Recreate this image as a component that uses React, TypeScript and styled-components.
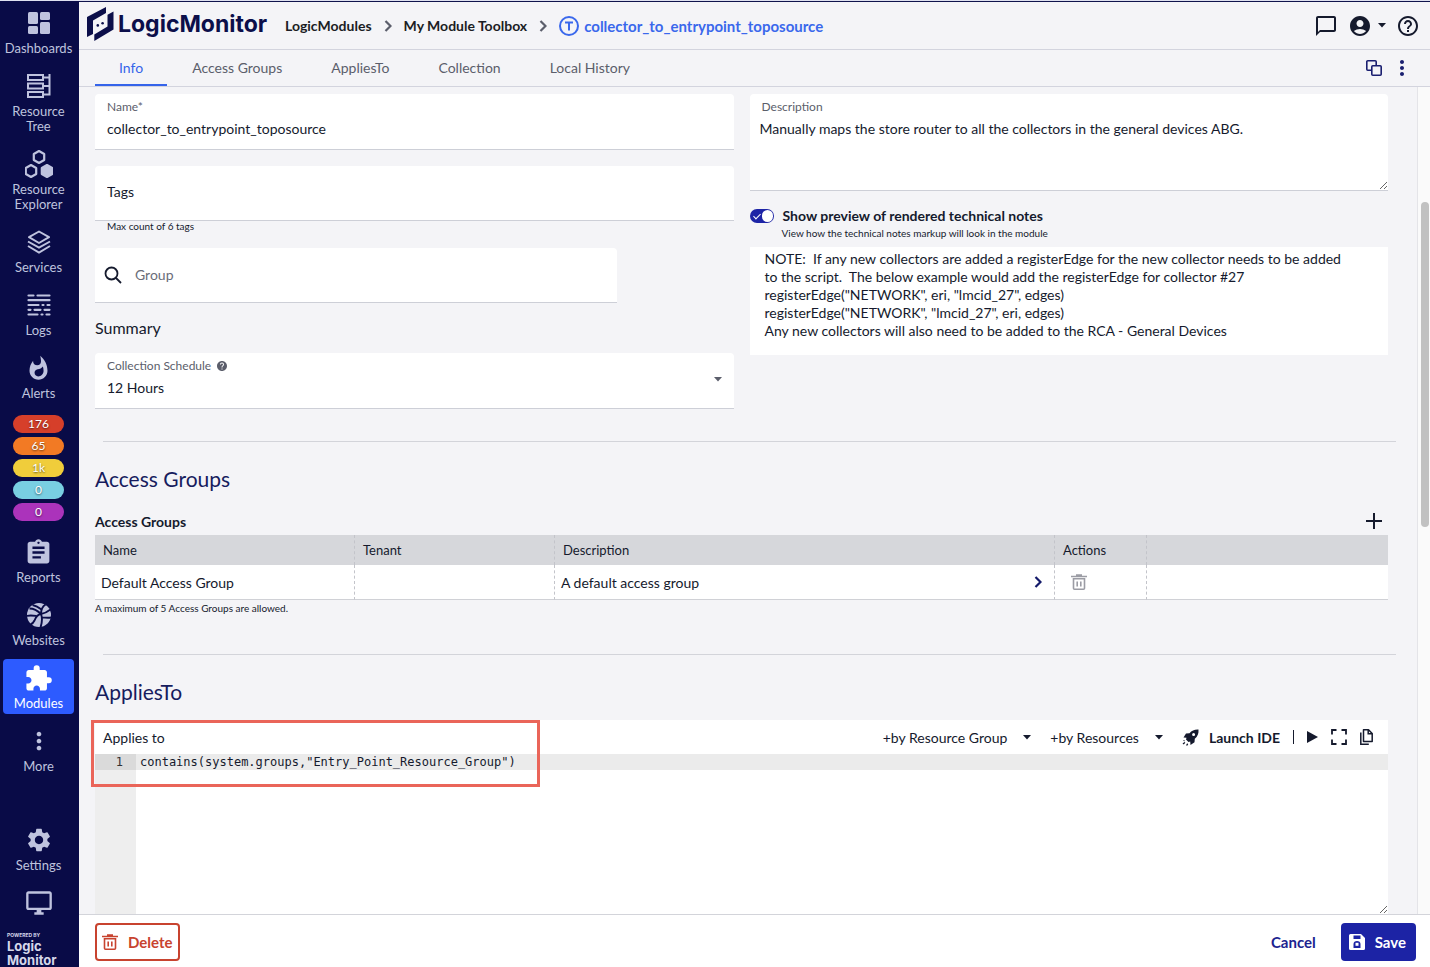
import React from "react";
import styled, { createGlobalStyle } from "styled-components";
import {
  MdAccountCircle,
  MdAssignment,
  MdChatBubbleOutline,
  MdExtension,
  MdHelp,
  MdHelpOutline,
  MdMoreVert,
  MdOutlineDesktopWindows,
  MdSettings,
  MdWhatshot,
} from "react-icons/md";

const GlobalStyle = createGlobalStyle`
  *, *::before, *::after { box-sizing: border-box; }
  body { margin: 0; background: #f4f4f7; }
  body, button, input, textarea, select {
    font-family: Lato, "Liberation Sans", sans-serif;
    color: #151a2d;
  }
  button { border: 0; padding: 0; background: none; cursor: pointer; }
  a { text-decoration: none; }
  svg { display: block; flex: none; }
`;

const Shell = styled.div`
  display: flex;
  height: 100vh;
  overflow: hidden;
  border-top: 1px solid #dfe1f0;
`;

/* ---------- sidebar ---------- */

const Sidebar = styled.nav`
  flex: none;
  width: 79px;
  display: flex;
  flex-direction: column;
  gap: 8px;
  padding: 3px 5px 0 3px;
  background: #090b47;
`;

const NavItem = styled.a<{ $active?: boolean }>`
  display: flex;
  flex-direction: column;
  align-items: center;
  gap: 4px;
  padding: 5px 0 3px;
  border-radius: 4px;
  background: ${(p) => (p.$active ? "#2d5bff" : "transparent")};
  color: ${(p) => (p.$active ? "#ffffff" : "#bfc3de")};
  font-size: 13px;
  line-height: 15px;
  text-align: center;
`;

const NavIcon = styled.span`
  display: flex;
  align-items: center;
  justify-content: center;
  height: 28px;
`;

const BadgeList = styled.div`
  display: flex;
  flex-direction: column;
  align-items: center;
  gap: 4px;
  margin: 3px 0 4px;
`;

const Badge = styled.a<{ $color: string }>`
  width: 51px;
  border-radius: 9px;
  background: ${(p) => p.$color};
  color: #fff;
  font-size: 12px;
  line-height: 18px;
  text-align: center;
  text-shadow: 0 1px 2px rgba(0, 0, 0, 0.6);
`;

const NavBottom = styled.div`
  display: flex;
  flex-direction: column;
  gap: 8px;
  margin-top: auto;
`;

const Powered = styled.div`
  padding: 4px 4px 0;
  color: #d5d8ea;
  font-family: Inter, sans-serif;
  font-size: 13px;
  font-weight: 700;
  line-height: 14px;
`;

const PoweredSmall = styled.div`
  font-size: 5px;
  line-height: 7px;
`;

/* ---------- header ---------- */

const Main = styled.div`
  flex: 1;
  min-width: 0;
  display: flex;
  flex-direction: column;
  border-top: 1px solid #10144d;
`;

const TopBar = styled.header`
  flex: none;
  display: flex;
  align-items: center;
  height: 48px;
  padding: 0 10px 0 8px;
  border-bottom: 1px solid #d3d4de;
`;

const Logo = styled.a`
  display: flex;
  align-items: center;
  gap: 4px;
  width: 198px;
  padding-bottom: 4px;
  color: #0c0f4a;
  font-family: Inter, sans-serif;
  font-size: 23px;
  font-weight: 700;
`;

const Crumbs = styled.div`
  display: flex;
  align-items: center;
  gap: 12px;
`;

const Crumb = styled.a<{ $current?: boolean }>`
  display: flex;
  align-items: center;
  gap: 5px;
  color: ${(p) => (p.$current ? "#3a68ec" : "#1b1d24")};
  font-size: ${(p) => (p.$current ? 15 : 14)}px;
  font-weight: 700;
`;

const Actions = styled.div<{ $gap: number }>`
  display: flex;
  align-items: center;
  gap: ${(p) => p.$gap}px;
  margin-left: auto;
`;

const IconButton = styled.button<{ $color?: string }>`
  display: flex;
  align-items: center;
  gap: 6px;
  color: ${(p) => p.$color ?? "#151a2d"};
`;

const TabBar = styled.div`
  flex: none;
  display: flex;
  gap: 1px;
  height: 37px;
  padding: 0 16px;
  border-bottom: 1px solid #d3d4de;
`;

const Tab = styled.button<{ $active?: boolean }>`
  padding: 0 24px;
  border-bottom: 2px solid ${(p) => (p.$active ? "#3564ea" : "transparent")};
  color: ${(p) => (p.$active ? "#3564ea" : "#5b5e6b")};
  font-size: 14px;
`;

/* ---------- content ---------- */

const Body = styled.div`
  flex: 1;
  min-height: 0;
  display: flex;
`;

const Content = styled.main`
  flex: 1;
  min-width: 0;
  display: flex;
  flex-direction: column;
  padding: 7px 29px 0 16px;
  overflow: hidden;
`;

const ScrollTrack = styled.div`
  flex: none;
  width: 13px;
  padding: 115px 1px 0 3px;
  border-left: 1px solid #e4e4e8;
  background: #fafafa;
`;

const ScrollThumb = styled.div`
  height: 325px;
  border-radius: 4px;
  background: #c1c1c1;
`;

const Columns = styled.div`
  flex: none;
  display: grid;
  grid-template-columns: 1fr 1fr;
  gap: 16px;
`;

const Column = styled.div`
  display: flex;
  flex-direction: column;
  min-width: 0;
`;

const Field = styled.div`
  display: flex;
  flex-direction: column;
  justify-content: center;
  gap: 2px;
  height: 56px;
  padding: 0 12px 3px;
  border-bottom: 1px solid #cdcfd7;
  border-radius: 4px 4px 0 0;
  background: #fff;
`;

const FieldLabel = styled.label`
  display: flex;
  align-items: center;
  gap: 5px;
  color: #5b5e6b;
  font-size: 12px;
  line-height: 16px;
`;

const TextInput = styled.input`
  width: 100%;
  padding: 0;
  border: 0;
  outline: 0;
  background: none;
  font-size: 14px;
  line-height: 24px;
  &::placeholder { color: inherit; opacity: 1; }
`;

const TagsField = styled(Field)`
  height: 55px;
  margin-top: 16px;
`;

const GroupField = styled(TagsField)`
  flex-direction: row;
  justify-content: flex-start;
  align-items: center;
  gap: 13px;
  width: calc(100% - 117px);
  padding: 0 9px;
  input::placeholder { color: #6a6d79; }
`;

const ScheduleField = styled(Field)`
  flex-direction: row;
  align-items: center;
  margin-top: 15px;
`;

const SelectColumn = styled.div`
  flex: 1;
  display: flex;
  flex-direction: column;
  gap: 2px;
`;

const Select = styled.select`
  padding: 0;
  border: 0;
  appearance: none;
  background: none;
  font-size: 14px;
  line-height: 24px;
`;

const Hint = styled.div<{ $indent?: number; $top?: number }>`
  flex: none;
  margin-top: ${(p) => p.$top ?? 0}px;
  padding-left: ${(p) => p.$indent ?? 0}px;
  font-size: 10px;
  line-height: 11px;
`;

const SummaryTitle = styled.h3`
  margin: 15px 0 0;
  font-size: 16px;
  font-weight: 400;
  line-height: 20px;
`;

const DescriptionField = styled.div`
  display: flex;
  flex-direction: column;
  height: 97px;
  padding-top: 5px;
  border-bottom: 1px solid #cdcfd7;
  border-radius: 4px 4px 0 0;
  background: #fff;
  label { padding-left: 12px; }
`;

const DescriptionArea = styled.textarea`
  flex: 1;
  width: 100%;
  padding: 5px 10px 0;
  border: 0;
  outline: 0;
  resize: vertical;
  background: none;
  font-size: 14px;
  line-height: 18px;
`;

const ToggleRow = styled.label`
  display: flex;
  align-items: center;
  gap: 9px;
  margin-top: 15px;
  font-size: 14px;
  font-weight: 700;
  line-height: 20px;
`;

const Toggle = styled.input`
  position: relative;
  flex: none;
  appearance: none;
  width: 24px;
  height: 14px;
  margin: 0;
  border-radius: 7px;
  background: #1d24a6;
  &::before {
    content: "";
    position: absolute;
    right: 1px;
    top: 1px;
    width: 11px;
    height: 12px;
    border-radius: 6px;
    background: #fff;
  }
  &::after {
    content: "";
    position: absolute;
    left: 5px;
    top: 3px;
    width: 4px;
    height: 7px;
    border: solid #fff;
    border-width: 0 1px 1px 0;
    transform: rotate(45deg);
  }
`;

const Notes = styled.div`
  margin-top: 8px;
  padding: 3px 8px 15px 15px;
  background: #fff;
  font-size: 14px;
  line-height: 18px;
  white-space: pre-wrap;
`;

const Divider = styled.hr<{ $top: number }>`
  flex: none;
  height: 1px;
  margin: ${(p) => p.$top}px -8px 0 8px;
  border: 0;
  background: #d3d4da;
`;

const SectionTitle = styled.h2`
  flex: none;
  margin: 23px 0 0;
  color: #171c5e;
  font-size: 21px;
  font-weight: 400;
  line-height: 28px;
`;

const TableHeading = styled.div`
  flex: none;
  display: flex;
  align-items: center;
  justify-content: space-between;
  height: 28px;
  margin-top: 14px;
  padding-right: 6px;
  font-size: 14px;
  font-weight: 700;
`;

const Table = styled.table`
  flex: none;
  width: 100%;
  table-layout: fixed;
  border-collapse: separate;
  border-spacing: 0;
  th, td {
    text-align: left;
    border-right: 1px dashed #c3c4ca;
  }
  th:last-child, td:last-child { border-right: 0; }
  th {
    height: 30px;
    padding: 0 8px;
    background: #d6d7db;
    font-size: 13px;
    font-weight: 400;
  }
  td {
    height: 35px;
    padding: 0 6px;
    border-bottom: 1px solid #d0d1d6;
    background: #fff;
    font-size: 14px;
  }
`;

const Col = styled.col<{ $width?: number }>`
  width: ${(p) => (p.$width ? `${p.$width}px` : "auto")};
`;

const CellRow = styled.div`
  display: flex;
  align-items: center;
  justify-content: space-between;
  padding-right: 6px;
`;

const TrashCell = styled.td`
  && { padding-left: 16px; }
`;

const Editor = styled.section`
  position: relative;
  flex: 1;
  min-height: 160px;
  display: flex;
  flex-direction: column;
  margin-top: 14px;
  background: #fff;
`;

const EditorBar = styled.div`
  flex: none;
  display: flex;
  align-items: center;
  height: 34px;
  padding: 0 15px 0 8px;
  font-size: 14px;
`;

const EditorTools = styled.div`
  display: flex;
  align-items: center;
  gap: 13px;
  margin-left: auto;
`;

const ToolMenu = styled.button`
  display: flex;
  align-items: center;
  gap: 16px;
  padding-right: 6px;
  font-size: 14px;
`;

const LaunchButton = styled.button`
  display: flex;
  align-items: center;
  gap: 10px;
  font-size: 14px;
  font-weight: 700;
`;

const ToolSeparator = styled.span`
  width: 1px;
  height: 14px;
  background: #151a2d;
`;

const EditorBody = styled.div`
  flex: 1;
  display: flex;
  min-height: 0;
  font-size: 12px;
`;

const Gutter = styled.div`
  width: 41px;
  background: #eeeeee;
`;

const LineNumber = styled.div`
  padding-right: 13px;
  background: #dadada;
  color: #333;
  font-family: "DejaVu Sans Mono", monospace;
  line-height: 16px;
  text-align: right;
`;

const Code = styled.textarea`
  flex: 1;
  padding: 0 4px;
  border: 0;
  outline: 0;
  resize: vertical;
  background: linear-gradient(#ebebeb, #ebebeb) 0 0 / 100% 16px no-repeat;
  font-family: "DejaVu Sans Mono", monospace;
  font-size: 12px;
  line-height: 16px;
`;

const Highlight = styled.div`
  position: absolute;
  left: -4px;
  top: 0;
  width: 449px;
  height: 67px;
  border: 3px solid #ea6559;
  pointer-events: none;
`;

/* ---------- footer ---------- */

const Footer = styled.footer`
  flex: none;
  display: flex;
  align-items: center;
  gap: 25px;
  height: 53px;
  padding: 1px 14px 0 16px;
  border-top: 1px solid #d3d4da;
  background: #fff;
`;

const FooterButton = styled.button`
  display: flex;
  align-items: center;
  gap: 10px;
  height: 38px;
  border-radius: 4px;
  font-size: 15px;
  font-weight: 700;
`;

const DeleteButton = styled(FooterButton)`
  padding: 0 5px;
  border: 2px solid #c8432f;
  color: #c8432f;
`;

const CancelButton = styled(FooterButton)`
  margin-left: auto;
  color: #1c2390;
`;

const SaveButton = styled(FooterButton)`
  padding: 0 10px 0 8px;
  background: #1c23a5;
  color: #fff;
`;

/* ---------- icons ---------- */

const DashboardIcon = () => (
  <svg width="22" height="22" viewBox="0 0 22 22" fill="currentColor">
    <rect width="10" height="12" rx="1.5" />
    <rect y="14" width="10" height="8" rx="1.5" />
    <rect x="12" width="10" height="8" rx="1.5" />
    <rect x="12" y="10" width="10" height="12" rx="1.5" />
  </svg>
);

const TreeIcon = () => (
  <svg width="24" height="24" viewBox="0 0 24 24" fill="none" stroke="currentColor" strokeWidth="2">
    <rect x="1" y="1" width="15" height="5" />
    <rect x="1" y="9.5" width="15" height="5" />
    <rect x="1" y="18" width="15" height="5" />
    <path d="M16 3.5h7M16 12h7M16 20.5h7M22.5 0v21.5" />
  </svg>
);

const hexagon = (cx: number, cy: number, r: number) =>
  [0, 1, 2, 3, 4, 5]
    .map((i) => {
      const a = (Math.PI / 3) * i + Math.PI / 6;
      return `${(cx + r * Math.cos(a)).toFixed(2)},${(cy + r * Math.sin(a)).toFixed(2)}`;
    })
    .join(" ");

const ExplorerIcon = () => (
  <svg width="28" height="28" viewBox="0 0 28 28" fill="none" stroke="currentColor" strokeWidth="2.2" strokeLinejoin="round">
    <polygon points={hexagon(14, 7, 6)} />
    <polygon points={hexagon(6, 21, 6)} />
    <polygon points={hexagon(22, 21, 6)} fill="currentColor" />
  </svg>
);

const LayersIcon = () => (
  <svg width="24" height="24" viewBox="0 0 24 24" fill="none" stroke="currentColor" strokeWidth="2">
    <path d="M12 1.5 22 7.2 12 13 2 7.2z" strokeLinejoin="round" />
    <path d="m1 11.5 11 6.2 11-6.2M1 16l11 6.5L23 16" />
  </svg>
);

const LogsIcon = () => (
  <svg width="24" height="22" viewBox="0 0 24 22" stroke="currentColor" strokeWidth="2.2" strokeLinecap="round">
    <path d="M1.5 1.5h5M10.5 1.5h12M1.5 6.2h21M1.5 11h10M15.5 11h1M20.5 11h2M1.5 15.8h2M7.5 15.8h6M17.5 15.8h5M1.5 20.5h9M14.5 20.5h1M19.5 20.5h3" />
  </svg>
);

const GlobeIcon = () => (
  <svg width="24" height="24" viewBox="0 0 24 24">
    <circle cx="12" cy="12" r="12" fill="currentColor" />
    <g fill="none" stroke="#090b47" strokeWidth="1.9">
      <path d="M2.5 5.5C7 5.5 11 8 14 11M5.500 2C8 2.500 12 4.500 14.500 6.500M14 11C10.500 11.500 9 13.500 7.500 17.500 6.500 19.500 5 21 3.500 21.500" />
      <path d="M14 11C15.500 15 15 20 13.500 24.500M14 11C14 7.500 15.500 3.500 18.500 1.500M14 11C18 10.500 21 8.500 23.500 6.500M14.500 14.500C18 14.500 21 15 24 14.500M-0.500 13C3 12 6 12.500 9.500 13" />
    </g>
  </svg>
);

const LogoMark = () => (
  <svg width="27" height="34" viewBox="0 0 27 34" fill="currentColor">
    <path d="M19 0v6L6 13.500V27l-6 3V10z" />
    <path d="M26.500 4.500v18L7.300 34v-6.500l13.200-8V7.800z" />
    <circle cx="10.800" cy="18.400" r="1.300" />
    <circle cx="15.600" cy="16.200" r="1.300" />
  </svg>
);

const Chevron = ({ color }: { color: string }) => (
  <svg width="8" height="12" viewBox="0 0 8 12" fill="none" stroke={color} strokeWidth="2.2">
    <path d="m1.500 1 5 5-5 5" />
  </svg>
);

const Caret = ({ color = "currentColor" }: { color?: string }) => (
  <svg width="8" height="5" viewBox="0 0 8 5" fill={color}>
    <path d="M0 0h8L4 4.500z" />
  </svg>
);

const TopoIcon = () => (
  <svg width="20" height="20" viewBox="0 0 20 20" fill="none" stroke="currentColor" strokeWidth="2">
    <circle cx="10" cy="10" r="9" />
    <path d="M6 6.500h8M10 6.500v8" />
  </svg>
);

const CloneIcon = () => (
  <svg width="16" height="16" viewBox="0 0 16 16" fill="none" stroke="currentColor" strokeWidth="1.6">
    <rect x="5.8" y="5.8" width="9.4" height="9.4" rx="1" />
    <path d="M5.800 10.200H1.800a1 1 0 0 1-1-1V1.800a1 1 0 0 1 1-1h7.400a1 1 0 0 1 1 1v4" />
  </svg>
);

const SearchIcon = () => (
  <svg width="18" height="18" viewBox="0 0 18 18" fill="none" stroke="currentColor" strokeWidth="1.8">
    <circle cx="7.5" cy="7.5" r="6" />
    <path d="m12 12 5 5" />
  </svg>
);

const PlusIcon = () => (
  <svg width="16" height="16" viewBox="0 0 16 16" stroke="currentColor" strokeWidth="2">
    <path d="M8 0v16M0 8h16" />
  </svg>
);

const TrashIcon = () => (
  <svg width="16" height="16" viewBox="0 0 16 16" fill="none" stroke="currentColor" strokeWidth="1.6">
    <path d="M0 2.500h16M5 1h6M2.500 4.800h11v9.400a1 1 0 0 1-1 1h-9a1 1 0 0 1-1-1zM6.200 7.500v5M9.800 7.500v5" />
  </svg>
);

const RocketIcon = () => (
  <svg width="17" height="17" viewBox="0 0 17 17" fill="currentColor">
    <path
      fillRule="evenodd"
      d="M16.500.5C12.500.3 9.800 1.500 7.500 4.200L4 4.500 1.500 8.500l3 .3-.5 1.700 2.500 2.500 1.700-.5.3 3.500 4-2.700.3-3.600c2.800-2.200 4-5 3.700-9.200zM11.600 3.900a1.500 1.500 0 1 1 0 3 1.500 1.500 0 0 1 0-3z"
    />
    <path d="M1 11.500l1.500-.5v1.500zM.5 14.500l2-1.500.8.800-1.500 1.700zM4 16.200l1.200-2 1 1-1 1.500z" />
  </svg>
);

const PlayIcon = () => (
  <svg width="11" height="12" viewBox="0 0 11 12" fill="currentColor">
    <path d="M0 0 11 6 0 12z" />
  </svg>
);

const ExpandIcon = () => (
  <svg width="16" height="16" viewBox="0 0 16 16" fill="none" stroke="currentColor" strokeWidth="1.8">
    <path d="M1 5.500V1h4.500M10.500 1H15v4.500M15 10.500V15h-4.500M5.500 15H1v-4.500" />
  </svg>
);

const PagesIcon = () => (
  <svg width="13" height="16" viewBox="0 0 13 16" fill="none" stroke="currentColor" strokeWidth="1.5">
    <path d="M3.500.8h5L12.200 4.500v8h-8.700z" strokeLinejoin="round" />
    <path d="M8.200 1v3.800h4M.8 3.500v11.700h8" />
  </svg>
);

const SaveIcon = () => (
  <svg width="16" height="16" viewBox="0 0 16 16" fill="currentColor">
    <path
      fillRule="evenodd"
      d="M1.500 0H12l4 4v10.500a1.500 1.500 0 0 1-1.500 1.500h-13A1.500 1.500 0 0 1 0 14.500v-13A1.500 1.500 0 0 1 1.500 0zM4.500 1.500v3.500h7V1.500zM8 7c-2 0-3.500 1-3.500 3v4h7v-4c0-2-1.500-3-3.500-3z"
    />
    <rect x="6.5" y="8.8" width="3" height="3" />
  </svg>
);

/* ---------- data ---------- */

const navTop = [
  { label: "Dashboards", icon: <DashboardIcon /> },
  { label: "Resource Tree", icon: <TreeIcon /> },
  { label: "Resource Explorer", icon: <ExplorerIcon /> },
  { label: "Services", icon: <LayersIcon /> },
  { label: "Logs", icon: <LogsIcon /> },
  { label: "Alerts", icon: <MdWhatshot size={27} /> },
];

const badges = [
  { value: "176", color: "#d63f2a" },
  { value: "65", color: "#f27a24" },
  { value: "1k", color: "#f0cd3b" },
  { value: "0", color: "#79cfe2" },
  { value: "0", color: "#ab33bb" },
];

const navMiddle = [
  { label: "Reports", icon: <MdAssignment size={29} /> },
  { label: "Websites", icon: <GlobeIcon /> },
  { label: "Modules", icon: <MdExtension size={29} />, active: true },
  { label: "More", icon: <MdMoreVert size={28} /> },
];

const tabs = ["Info", "Access Groups", "AppliesTo", "Collection", "Local History"];

const notes = `NOTE:  If any new collectors are added a registerEdge for the new collector needs to be added
to the script.  The below example would add the registerEdge for collector #27
registerEdge("NETWORK", eri, "lmcid_27", edges)
registerEdge("NETWORK", "lmcid_27", eri, edges)
Any new collectors will also need to be added to the RCA - General Devices`;

export default function App() {
  return (
    <Shell>
      <GlobalStyle />
      <Sidebar aria-label="Main">
        {navTop.map((n) => (
          <NavItem key={n.label} href="#">
            <NavIcon>{n.icon}</NavIcon>
            {n.label}
          </NavItem>
        ))}
        <BadgeList>
          {badges.map((b, i) => (
            <Badge key={i} href="#" $color={b.color}>
              {b.value}
            </Badge>
          ))}
        </BadgeList>
        {navMiddle.map((n) => (
          <NavItem key={n.label} href="#" $active={n.active}>
            <NavIcon>{n.icon}</NavIcon>
            {n.label}
          </NavItem>
        ))}
        <NavBottom>
          <NavItem href="#">
            <NavIcon>
              <MdSettings size={28} />
            </NavIcon>
            Settings
          </NavItem>
          <NavItem href="#" aria-label="Remote session">
            <NavIcon>
              <MdOutlineDesktopWindows size={28} />
            </NavIcon>
          </NavItem>
          <Powered>
            <PoweredSmall>POWERED BY</PoweredSmall>
            Logic
            <br />
            Monitor
          </Powered>
        </NavBottom>
      </Sidebar>

      <Main>
        <TopBar>
          <Logo href="#">
            <LogoMark />
            LogicMonitor
          </Logo>
          <Crumbs>
            <Crumb href="#">LogicModules</Crumb>
            <Chevron color="#5b5e6b" />
            <Crumb href="#">My Module Toolbox</Crumb>
            <Chevron color="#5b5e6b" />
            <Crumb href="#" $current>
              <TopoIcon />
              collector_to_entrypoint_toposource
            </Crumb>
          </Crumbs>
          <Actions $gap={10}>
            <IconButton aria-label="Messages">
              <MdChatBubbleOutline size={24} />
            </IconButton>
            <IconButton aria-label="Account">
              <MdAccountCircle size={24} />
              <Caret />
            </IconButton>
            <IconButton aria-label="Help">
              <MdHelpOutline size={24} />
            </IconButton>
          </Actions>
        </TopBar>

        <TabBar>
          {tabs.map((t, i) => (
            <Tab key={t} $active={i === 0}>
              {t}
            </Tab>
          ))}
          <Actions $gap={8}>
            <IconButton aria-label="Clone" $color="#1a1f70">
              <CloneIcon />
            </IconButton>
            <IconButton aria-label="More options" $color="#1a1f70">
              <MdMoreVert size={24} />
            </IconButton>
          </Actions>
        </TabBar>

        <Body>
          <Content>
            <Columns>
              <Column>
                <Field>
                  <FieldLabel htmlFor="name">Name*</FieldLabel>
                  <TextInput id="name" defaultValue="collector_to_entrypoint_toposource" />
                </Field>
                <TagsField>
                  <TextInput aria-label="Tags" placeholder="Tags" />
                </TagsField>
                <Hint $indent={12}>Max count of 6 tags</Hint>
                <GroupField>
                  <SearchIcon />
                  <TextInput aria-label="Group" placeholder="Group" />
                </GroupField>
                <SummaryTitle>Summary</SummaryTitle>
                <ScheduleField>
                  <SelectColumn>
                    <FieldLabel htmlFor="schedule">
                      Collection Schedule <MdHelp size={12} />
                    </FieldLabel>
                    <Select id="schedule" defaultValue="12">
                      <option value="12">12 Hours</option>
                    </Select>
                  </SelectColumn>
                  <Caret color="#5b5e6b" />
                </ScheduleField>
              </Column>
              <Column>
                <DescriptionField>
                  <FieldLabel htmlFor="description">Description</FieldLabel>
                  <DescriptionArea
                    id="description"
                    defaultValue="Manually maps the store router to all the collectors in the general devices ABG."
                  />
                </DescriptionField>
                <ToggleRow>
                  <Toggle type="checkbox" defaultChecked />
                  Show preview of rendered technical notes
                </ToggleRow>
                <Hint $indent={32} $top={2}>
                  View how the technical notes markup will look in the module
                </Hint>
                <Notes>{notes}</Notes>
              </Column>
            </Columns>

            <Divider $top={32} />
            <SectionTitle>Access Groups</SectionTitle>
            <TableHeading>
              Access Groups
              <IconButton aria-label="Add access group">
                <PlusIcon />
              </IconButton>
            </TableHeading>
            <Table>
              <colgroup>
                <Col $width={260} />
                <Col $width={200} />
                <Col $width={500} />
                <Col $width={92} />
                <Col />
              </colgroup>
              <thead>
                <tr>
                  <th>Name</th>
                  <th>Tenant</th>
                  <th>Description</th>
                  <th>Actions</th>
                  <th />
                </tr>
              </thead>
              <tbody>
                <tr>
                  <td>Default Access Group</td>
                  <td />
                  <td>
                    <CellRow>
                      A default access group
                      <IconButton aria-label="Expand description">
                        <Chevron color="#141a6a" />
                      </IconButton>
                    </CellRow>
                  </td>
                  <TrashCell>
                    <IconButton aria-label="Remove access group" $color="#9b9ca4">
                      <TrashIcon />
                    </IconButton>
                  </TrashCell>
                  <td />
                </tr>
              </tbody>
            </Table>
            <Hint $top={3}>A maximum of 5 Access Groups are allowed.</Hint>

            <Divider $top={40} />
            <SectionTitle>AppliesTo</SectionTitle>
            <Editor>
              <EditorBar>
                <label htmlFor="applies">Applies to</label>
                <EditorTools>
                  <ToolMenu>
                    +by Resource Group <Caret />
                  </ToolMenu>
                  <ToolMenu>
                    +by Resources <Caret />
                  </ToolMenu>
                  <LaunchButton>
                    <RocketIcon />
                    Launch IDE
                  </LaunchButton>
                  <ToolSeparator />
                  <IconButton aria-label="Run">
                    <PlayIcon />
                  </IconButton>
                  <IconButton aria-label="Full screen">
                    <ExpandIcon />
                  </IconButton>
                  <IconButton aria-label="Copy">
                    <PagesIcon />
                  </IconButton>
                </EditorTools>
              </EditorBar>
              <EditorBody>
                <Gutter>
                  <LineNumber>1</LineNumber>
                </Gutter>
                <Code
                  id="applies"
                  spellCheck={false}
                  defaultValue={'contains(system.groups,"Entry_Point_Resource_Group")'}
                />
              </EditorBody>
              <Highlight />
            </Editor>
          </Content>
          <ScrollTrack aria-hidden="true">
            <ScrollThumb />
          </ScrollTrack>
        </Body>

        <Footer>
          <DeleteButton>
            <TrashIcon />
            Delete
          </DeleteButton>
          <CancelButton>Cancel</CancelButton>
          <SaveButton>
            <SaveIcon />
            Save
          </SaveButton>
        </Footer>
      </Main>
    </Shell>
  );
}
